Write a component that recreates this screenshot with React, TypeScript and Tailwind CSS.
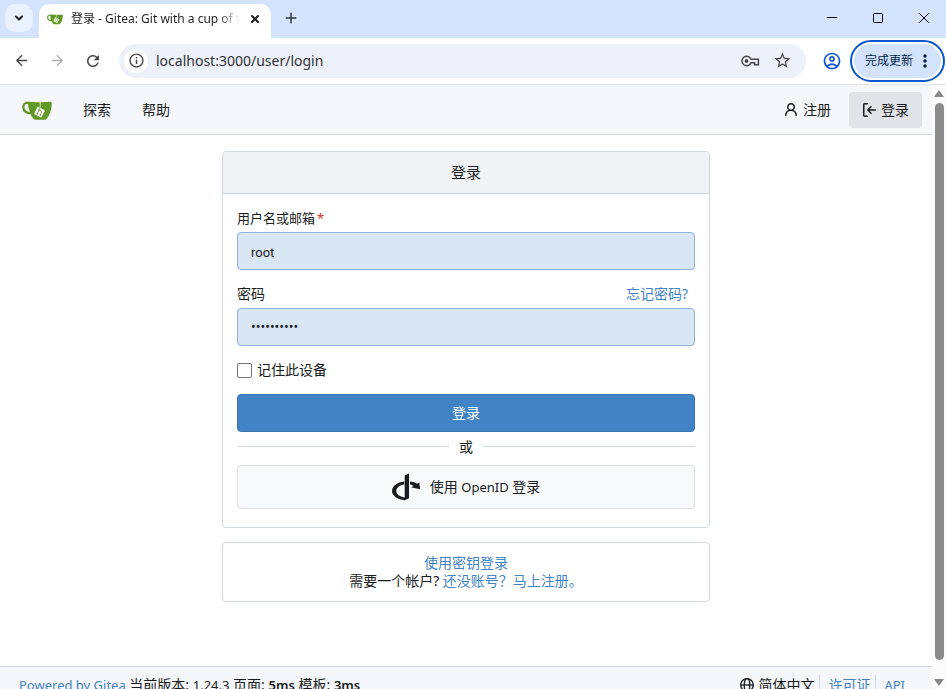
import type { ReactNode } from 'react'
import { ChevronDown, X } from 'lucide-react'
import {
  MdAdd,
  MdArrowBack,
  MdArrowForward,
  MdInfoOutline,
  MdMoreVert,
  MdOutlineAccountCircle,
  MdRefresh,
  MdStarBorder,
} from 'react-icons/md'

function GiteaLogo({ className }: { className?: string }) {
  return (
    <svg viewBox="0 0 640 640" className={className} aria-hidden="true">
      <path
        fill="#fff"
        d="m395.9 484.2-126.9-61c-12.5-6-17.9-21.2-11.8-33.8l61-126.9c6-12.5 21.2-17.9 33.8-11.8 17.2 8.3 27.1 13 27.1 13l-.1-109.2 16.7-.1.1 117.1s57.4 24.2 83.1 40.1c3.7 2.3 10.2 6.8 12.9 14.4 2.1 6.1 2 13.1-1 19.3l-61 126.9c-6.2 12.7-21.4 18.1-33.9 12"
      />
      <path
        fill="#609926"
        d="M622.7 149.8c-4.1-4.1-9.6-4-9.6-4s-117.2 6.6-177.9 8c-13.3.3-26.5.6-39.6.7v117.2c-5.5-2.6-11.1-5.3-16.6-7.9 0-36.4-.1-109.2-.1-109.2-29 .4-89.2-2.2-89.2-2.2s-141.4-7.1-156.8-8.5c-9.8-.6-22.5-2.1-39 1.5-8.7 1.8-33.5 7.4-53.8 26.9C-4.9 212.4 6.6 276.2 8 285.8c1.7 11.7 6.9 44.2 31.7 72.5 45.8 56.1 144.4 54.8 144.4 54.8s12.1 28.9 30.6 55.5c25 33.1 50.7 58.9 75.7 62 63 0 188.9-.1 188.9-.1s12 .1 28.3-10.3c14-8.5 26.5-23.4 26.5-23.4S547 483 565 451.5c5.5-9.7 10.1-19.1 14.1-28 0 0 55.2-117.1 55.2-231.1-1.1-34.5-9.6-40.6-11.6-42.6M125.6 353.9c-25.9-8.5-36.9-18.7-36.9-18.7S69.6 321.8 60 295.4c-16.5-44.2-1.4-71.2-1.4-71.2s8.4-22.5 38.5-30c13.8-3.7 31-3.1 31-3.1s7.1 59.4 15.7 94.2c7.2 29.2 24.8 77.7 24.8 77.7s-26.1-3.1-43-9.1m300.3 107.6s-6.1 14.5-19.6 15.4c-5.8.4-10.3-1.2-10.3-1.2s-.3-.1-5.3-2.1l-112.9-55s-10.9-5.7-12.8-15.6c-2.2-8.1 2.7-18.1 2.7-18.1L322 273s4.8-9.7 12.2-13c.6-.3 2.3-1 4.5-1.5 8.1-2.1 18 2.8 18 2.8L467.4 315s12.6 5.7 15.3 16.2c1.9 7.4-.5 14-1.8 17.2-6.3 15.4-55 113.1-55 113.1"
      />
      <path
        fill="#609926"
        d="M326.8 380.1c-8.2.1-15.4 5.8-17.3 13.8s2 16.3 9.1 20c7.7 4 17.5 1.8 22.7-5.4 5.1-7.1 4.3-16.9-1.8-23.1l24-49.1c1.5.1 3.7.2 6.2-.5 4.1-.9 7.1-3.6 7.1-3.6 4.2 1.8 8.6 3.8 13.2 6.1 4.8 2.4 9.3 4.9 13.4 7.3.9.5 1.8 1.1 2.8 1.9 1.6 1.3 3.4 3.1 4.7 5.5 1.9 5.5-1.9 14.9-1.9 14.9-2.3 7.6-18.4 40.6-18.4 40.6-8.1-.2-15.3 5-17.7 12.5-2.6 8.1 1.1 17.3 8.9 21.3s17.4 1.7 22.5-5.3c5-6.8 4.6-16.3-1.1-22.6 1.9-3.7 3.7-7.4 5.6-11.3 5-10.4 13.5-30.4 13.5-30.4.9-1.7 5.7-10.3 2.7-21.3-2.5-11.4-12.6-16.7-12.6-16.7-12.2-7.9-29.2-15.2-29.2-15.2s0-4.1-1.1-7.1c-1.1-3.1-2.8-5.1-3.9-6.3 4.7-9.7 9.4-19.3 14.1-29-4.1-2-8.1-4-12.2-6.1-4.8 9.8-9.7 19.7-14.5 29.5-6.7-.1-12.9 3.5-16.1 9.4-3.4 6.3-2.7 14.1 1.9 19.8z"
      />
    </svg>
  )
}

function OpenIdLogo() {
  return (
    <svg viewBox="0 0 28 28" className="size-7" fill="#181c21" aria-hidden="true">
      <path d="M12.7 2.6 17 0.4V25.2L12.7 27.2C5.6 26.6 0 22.8 0 18 0 13.2 5.2 9.3 12.2 8.6V11.6C7.6 12.3 4.3 14.9 4.3 18 4.3 21.3 7.9 23.8 12.7 24.4Z" />
      <path d="M18 8.6C20.8 8.9 23.2 9.6 25.2 10.8L27.4 9.6 28 16.2 19 14.3 21.6 12.9C20.6 12.3 19.4 11.8 18 11.6Z" />
    </svg>
  )
}

function PersonIcon() {
  return (
    <svg viewBox="0 0 16 16" className="size-4" fill="currentColor" aria-hidden="true">
      <path d="M10.561 8.073a6 6 0 0 1 3.432 5.142.75.75 0 1 1-1.498.07 4.5 4.5 0 0 0-8.99 0 .75.75 0 0 1-1.498-.07 6 6 0 0 1 3.431-5.142 3.999 3.999 0 1 1 5.123 0M10.5 5a2.5 2.5 0 1 0-5 0 2.5 2.5 0 0 0 5 0" />
    </svg>
  )
}

function SignInIcon() {
  return (
    <svg viewBox="0 0 16 16" className="size-4" fill="currentColor" aria-hidden="true">
      <path d="M2 2.75C2 1.784 2.784 1 3.75 1h2.5a.75.75 0 0 1 0 1.5h-2.5a.25.25 0 0 0-.25.25v10.5c0 .138.112.25.25.25h2.5a.75.75 0 0 1 0 1.5h-2.5A1.75 1.75 0 0 1 2 13.25Zm6.56 4.5h5.69a.75.75 0 0 1 0 1.5H8.56l1.97 1.97a.749.749 0 0 1-.326 1.275.749.749 0 0 1-.734-.215L6.22 8.53a.75.75 0 0 1 0-1.06l3.25-3.25a.749.749 0 0 1 1.275.326.749.749 0 0 1-.215.734Z" />
    </svg>
  )
}

function GlobeIcon() {
  return (
    <svg viewBox="0 0 16 16" className="size-[14px]" fill="none" stroke="currentColor" strokeWidth="1.5" aria-hidden="true">
      <circle cx="8" cy="8" r="7.2" />
      <ellipse cx="8" cy="8" rx="3.2" ry="7.2" />
      <path d="M1 8h14" />
    </svg>
  )
}

function KeyIcon() {
  return (
    <svg viewBox="0 0 19 12" className="h-3 w-[19px]" fill="none" stroke="currentColor" strokeWidth="1.5" aria-hidden="true">
      <path d="M10 4.3A4.7 4.7 0 1 0 10 7.7H13.6V9.7H17.4V4.3Z" />
      <circle cx="5.5" cy="6" r="1.9" fill="currentColor" stroke="none" />
    </svg>
  )
}

function IconButton({ label, children }: { label: string; children: ReactNode }) {
  return (
    <button type="button" aria-label={label} className="flex size-7 items-center justify-center">
      {children}
    </button>
  )
}

function TabStrip() {
  return (
    <div className="flex h-[38px] items-end bg-[#d3e3fd] text-[#1f1f1f]">
      <div className="flex h-full items-start pt-1 pl-[5px] pr-[6px]">
        <button type="button" aria-label="Search tabs" className="flex size-7 items-center justify-center rounded-[10px] bg-[#e9f1fe]">
          <ChevronDown className="size-3" strokeWidth={4} />
        </button>
      </div>
      <div className="flex h-[34px] w-[232px] items-center rounded-t-[10px] bg-white px-2 pb-1">
        <GiteaLogo className="size-4 shrink-0" />
        <span className="ml-2 flex-1 overflow-hidden text-xs whitespace-nowrap [mask-image:linear-gradient(to_right,black_88%,transparent)]">
          登录 - Gitea: Git with a cup of tea
        </span>
        <button type="button" aria-label="Close tab" className="ml-2 flex size-4 items-center justify-center">
          <X className="size-3" strokeWidth={4} />
        </button>
      </div>
      <div className="flex h-full items-center px-[6px] pb-[2px] text-[#333]">
        <IconButton label="New tab">
          <MdAdd className="size-[18px]" />
        </IconButton>
      </div>
      <div className="-mr-px ml-auto flex h-full items-center pb-[2px] text-black">
        <button type="button" aria-label="Minimize" className="flex h-full w-[46px] items-center justify-center">
          <svg viewBox="0 0 12 12" className="size-3" stroke="currentColor" fill="none">
            <path d="M1 5.5h10" />
          </svg>
        </button>
        <button type="button" aria-label="Maximize" className="flex h-full w-[46px] items-center justify-center">
          <svg viewBox="0 0 12 12" className="size-3" stroke="currentColor" fill="none">
            <rect x="1.5" y="1.5" width="9" height="9" rx="1" />
          </svg>
        </button>
        <button type="button" aria-label="Close" className="flex h-full w-[46px] items-center justify-center">
          <svg viewBox="0 0 12 12" className="size-3" stroke="currentColor" fill="none">
            <path d="m1 1 10 10M11 1 1 11" />
          </svg>
        </button>
      </div>
    </div>
  )
}

function Toolbar() {
  return (
    <div className="flex h-[47px] items-center border-b border-[#dfe1e5] bg-white pr-px pb-px pl-[7px] text-[#474747]">
      <div className="flex items-center gap-2">
        <IconButton label="Back">
          <MdArrowBack className="size-[17px]" />
        </IconButton>
        <IconButton label="Forward">
          <MdArrowForward className="size-[17px] text-[#b0b0b0]" />
        </IconButton>
        <IconButton label="Reload">
          <MdRefresh className="size-[18px]" />
        </IconButton>
      </div>
      <div className="ml-3 flex h-[34px] flex-1 items-center rounded-full bg-[#ecf1fa] px-[5px]">
        <button type="button" aria-label="Site information" className="flex size-6 shrink-0 items-center justify-center rounded-full bg-white">
          <MdInfoOutline className="size-[17px]" />
        </button>
        <input
          aria-label="Address"
          defaultValue="localhost:3000/user/login"
          className="ml-2 min-w-0 flex-1 bg-transparent text-[14px] text-[#333] outline-none"
        />
        <div className="flex items-center gap-1 pr-1">
          <IconButton label="Passwords">
            <KeyIcon />
          </IconButton>
          <IconButton label="Bookmark">
            <MdStarBorder className="size-[19px]" />
          </IconButton>
        </div>
      </div>
      <div className="ml-3 text-[#0b57d0]">
        <IconButton label="Profile">
          <MdOutlineAccountCircle className="size-5" />
        </IconButton>
      </div>
      <button
        type="button"
        className="ml-1 flex h-[42px] items-center rounded-full border-2 border-[#0b57d0] bg-[#d3e3fd] pr-2 pl-[13px] text-xs text-[#041e49] shadow-[inset_0_0_0_2px_white]"
      >
        完成更新
        <MdMoreVert className="ml-[2px] size-5" />
      </button>
    </div>
  )
}

function Navbar() {
  return (
    <nav className="flex h-[50px] items-center border-b border-[#d0d7de] bg-[#f6f7fa] pr-[10px] pl-[22px]">
      <a href="/" aria-label="Home">
        <GiteaLogo className="size-[30px]" />
      </a>
      <a href="/explore/repos" className="ml-[31px]">
        探索
      </a>
      <a href="/help" className="ml-[31px]">
        帮助
      </a>
      <a href="/user/sign_up" className="ml-auto flex items-center gap-1">
        <PersonIcon />
        注册
      </a>
      <a href="/user/login" className="ml-[18px] flex h-9 items-center gap-1 rounded bg-[#e2e3e7] pr-[13px] pl-3">
        <SignInIcon />
        登录
      </a>
    </nav>
  )
}

function LoginForm() {
  return (
    <section className="rounded border border-[#d0d7de]">
      <h4 className="flex h-[42px] items-center justify-center rounded-t border-b border-[#d0d7de] bg-[#f1f2f4] text-[15px]">
        登录
      </h4>
      <form className="px-[14px] pt-[14px] pb-[18px]" onSubmit={(e) => e.preventDefault()}>
        <label htmlFor="user_name" className="block text-[13px] leading-5">
          用户名或邮箱<span className="ml-[2px] text-[#db2828]">*</span>
        </label>
        <input
          id="user_name"
          defaultValue="root"
          className="mt-1 block h-[38px] w-full rounded border border-[#8db2dc] bg-[#d9e6f4] px-[13px] pt-[2px] font-[Roboto,sans-serif] text-[13px] outline-none"
        />
        <div className="mt-[14px] flex items-center justify-between leading-5">
          <label htmlFor="password">密码</label>
          <a href="/user/forgot_password" className="mr-[7px] text-[#4183c4]">
            忘记密码?
          </a>
        </div>
        <input
          id="password"
          type="password"
          defaultValue="0123456789"
          className="mt-1 block h-[38px] w-full rounded border border-[#8db2dc] bg-[#d9e6f4] px-[13px] font-[Roboto,sans-serif] text-[14px] outline-none"
        />
        <label className="mt-[14px] flex items-center gap-[5px] leading-5">
          <input type="checkbox" className="size-[15px] appearance-none rounded-[2px] border border-[#767676] bg-white" />
          记住此设备
        </label>
        <button type="submit" className="mt-[14px] block h-[38px] w-full rounded border border-[#3876b3] bg-[#4183c4] text-white">
          登录
        </button>
        <div className="mt-1 mb-2 flex h-[21px] items-center gap-[10px]">
          <span className="h-px flex-1 bg-[#d0d7de]" />
          或
          <span className="h-px flex-1 bg-[#d0d7de]" />
        </div>
        <a
          href="/user/login/openid"
          className="flex h-11 items-center justify-center gap-[10px] rounded border border-[#dcdee2] bg-[#f8f9fb]"
        >
          <OpenIdLogo />
          <span>
            使用 <span className="text-[13px]">OpenID</span> 登录
          </span>
        </a>
      </form>
    </section>
  )
}

function Footer() {
  return (
    <footer className="flex items-center justify-between border-t border-[#d0d7de] bg-[#f6f7fa] py-2 pr-[19px] pl-[19px] leading-5">
      <p>
        <a href="https://about.gitea.com" className="text-[13px] text-[#4183c4]">
          Powered by Gitea
        </a>{' '}
        当前版本: <span className="text-[13px]">1.24.3</span> 页面:{' '}
        <strong className="text-[13px] font-semibold">5ms</strong> 模板:{' '}
        <strong className="text-[13px] font-semibold">3ms</strong>
      </p>
      <div className="flex items-center text-[#4183c4]">
        <button type="button" className="flex items-center gap-1 border-r border-[#d0d7de] pr-[5px] text-[#181c21]">
          <GlobeIcon />
          简体中文
        </button>
        <a href="/assets/licenses.txt" className="border-r border-[#d0d7de] pr-[5px] pl-2">
          许可证
        </a>
        <a href="/api/swagger" className="px-2 text-[13px]">
          API
        </a>
      </div>
    </footer>
  )
}

function Scrollbar() {
  return (
    <div className="flex w-[14px] shrink-0 flex-col items-center bg-[#fcfcfc] pt-[5px] pb-[3px]" aria-hidden="true">
      <svg viewBox="0 0 10 7" className="h-[7px] w-[10px]" fill="#8b8b8b">
        <path d="M5 0 10 7H0z" />
      </svg>
      <div className="mt-[6px] mb-[19px] w-[9px] flex-1 rounded-full bg-[#8b8b8b]" />
      <svg viewBox="0 0 10 7" className="h-[7px] w-[10px]" fill="#8b8b8b">
        <path d="M5 7 10 0H0z" />
      </svg>
    </div>
  )
}

export default function App() {
  return (
    <div className="flex h-screen flex-col overflow-hidden bg-white font-['Noto_Sans','Noto_Sans_CJK_SC',sans-serif] text-sm text-[#181c21]">
      <TabStrip />
      <Toolbar />
      <div className="flex min-h-0 flex-1">
        <div className="min-w-0 flex-1 overflow-hidden">
          <Navbar />
          <main className="mx-auto w-full max-w-[488px] pt-4 pb-16">
            <LoginForm />
            <section className="mt-[14px] rounded border border-[#d0d7de] py-[11px] text-center leading-[18px]">
              <a href="/user/login/passkey" className="text-[#4183c4]">
                使用密钥登录
              </a>
              <p>
                需要一个帐户?{' '}
                <a href="/user/sign_up" className="text-[#4183c4]">
                  还没账号？马上注册。
                </a>
              </p>
            </section>
          </main>
          <Footer />
        </div>
        <Scrollbar />
      </div>
    </div>
  )
}
